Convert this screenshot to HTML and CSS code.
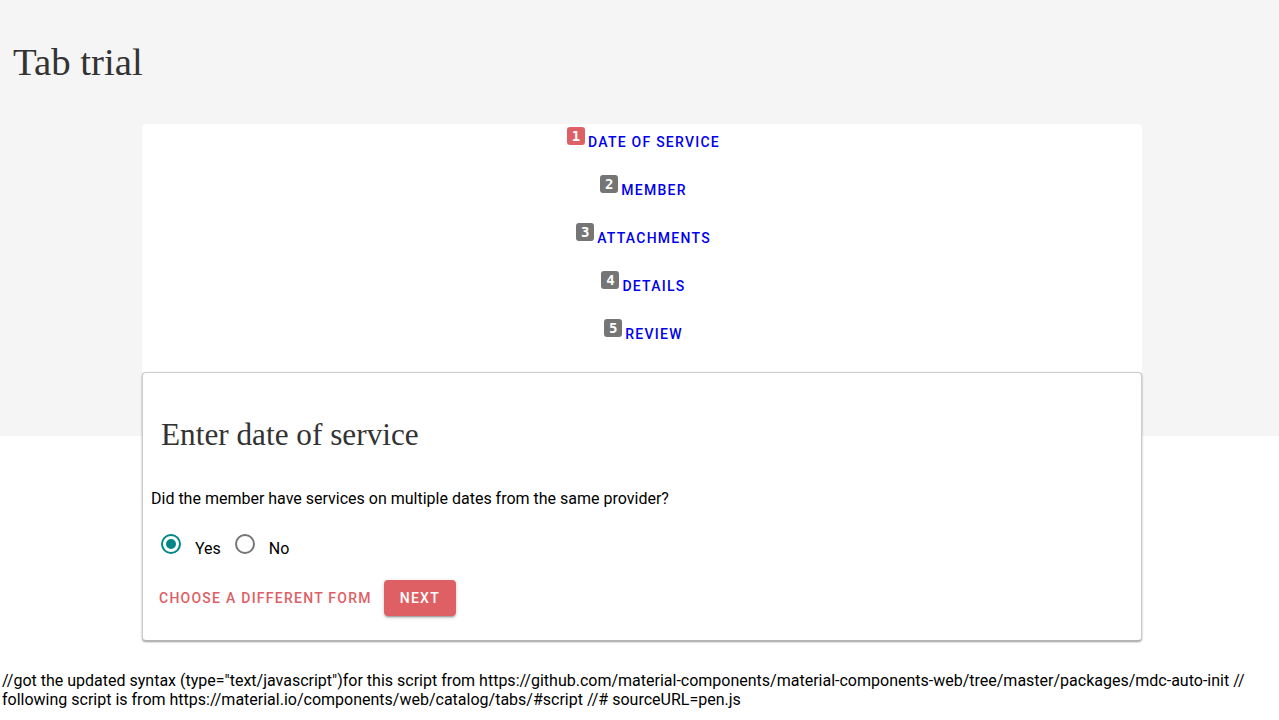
FILE: index.html
```html
<!DOCTYPE html>
<html lang="en">
<head>
    <meta charset="UTF-8">
    <meta name="viewport" content="width=device-width, initial-scale=1.0">
    <title>Tab trial</title>
    <link rel="stylesheet" href="styles.css">
</head>
<body>
    <header class="hero">
        <h1>Tab trial</h1>
    </header>
    <main class="wrapper">
        <nav class="tabs">
            <a class="tab" href="#"><span class="step step-active">1</span><span class="tab-label">Date of service</span></a>
            <a class="tab" href="#"><span class="step">2</span><span class="tab-label">Member</span></a>
            <a class="tab" href="#"><span class="step">3</span><span class="tab-label">Attachments</span></a>
            <a class="tab" href="#"><span class="step">4</span><span class="tab-label">Details</span></a>
            <a class="tab" href="#"><span class="step">5</span><span class="tab-label">Review</span></a>
        </nav>
        <section class="card">
            <h2>Enter date of service</h2>
            <p class="question">Did the member have services on multiple dates from the same provider?</p>
            <div class="radios">
                <label class="radio"><input type="radio" name="multiple" checked><span class="ring"></span><span>Yes</span></label>
                <label class="radio"><input type="radio" name="multiple"><span class="ring"></span><span>No</span></label>
            </div>
            <div class="actions">
                <button class="btn btn-text">Choose a different form</button>
                <button class="btn btn-raised">Next</button>
            </div>
        </section>
    </main>
    <p class="footnote">//got the updated syntax (type="text/javascript")for this script from https://github.com/material-components/material-components-web/tree/master/packages/mdc-auto-init // following script is from https://material.io/components/web/catalog/tabs/#script //# sourceURL=pen.js</p>
</body>
</html>
```

FILE: styles.css
```css
:root {
    --accent: #de6065;
    --teal: #018786;
    --band: #f5f5f5;
    --heading: #333333;
}
body {
    margin: 0;
    font-family: Roboto, sans-serif;
    font-size: 16px;
    color: #000000;
    background-color: #ffffff;
}
.hero {
    height: 436px;
    background-color: var(--band);
    padding: 40px 13px 0;
    box-sizing: border-box;
}
h1 {
    margin: 0;
    font-family: "Liberation Serif", serif;
    font-size: 38.8px;
    font-weight: 400;
    line-height: 44px;
    color: var(--heading);
}
.wrapper {
    width: 1000px;
    margin: -312px 0 0 142px;
}
.tabs {
    background-color: #ffffff;
    border-radius: 4px 4px 0 0;
    display: flex;
    flex-direction: column;
    height: 249px;
    margin-bottom: -1px;
}
.tab {
    height: 48px;
    display: flex;
    justify-content: center;
    padding-left: 3px;
    text-decoration: none;
    color: #0000ee;
}
.tab-label {
    font-size: 14px;
    font-weight: 500;
    letter-spacing: 1.25px;
    line-height: 20px;
    text-transform: uppercase;
    margin-top: 8px;
}
.step {
    width: 18px;
    height: 18px;
    border-radius: 3px;
    background-color: #757575;
    color: #ffffff;
    font-family: "DejaVu Sans Mono", monospace;
    font-size: 14px;
    font-weight: 700;
    line-height: 18px;
    text-align: center;
    margin: 3px 3px 0 0;
}
.step-active {
    background-color: var(--accent);
}
.card {
    height: 269px;
    box-sizing: border-box;
    border: 1px solid #cccccc;
    border-bottom-color: #b5b5b5;
    border-radius: 4px;
    background-color: #ffffff;
    box-shadow: 0 1px 2px rgba(0, 0, 0, 0.4);
    padding: 43px 8px 0;
    position: relative;
}
h2 {
    margin: 0 0 0 10px;
    font-family: "Liberation Serif", serif;
    font-size: 31.25px;
    font-weight: 400;
    line-height: 37px;
    color: var(--heading);
}
.question {
    margin: 34px 0 0;
    line-height: 24px;
}
.radios {
    display: flex;
    margin-top: 22px;
    height: 28px;
}
.radio {
    display: flex;
    margin-left: 10px;
    margin-right: 4px;
    cursor: pointer;
    line-height: 24px;
}
.radio span:last-child {
    padding-top: 4px;
}
.radio input {
    position: absolute;
    opacity: 0;
}
.ring {
    width: 20px;
    height: 20px;
    box-sizing: border-box;
    border: 2px solid #757575;
    border-radius: 50%;
    margin-right: 14px;
    display: flex;
    align-items: center;
    justify-content: center;
    margin-top: 1px;
}
input:checked + .ring {
    border-color: var(--teal);
}
input:checked + .ring::after {
    content: '';
    width: 10px;
    height: 10px;
    border-radius: 50%;
    background-color: var(--teal);
}
.actions {
    display: flex;
    align-items: center;
    gap: 4px;
    margin-top: 19px;
}
.btn {
    height: 36px;
    padding: 0 8px;
    border: none;
    border-radius: 4px;
    background: none;
    font-family: Roboto, sans-serif;
    font-size: 14px;
    font-weight: 500;
    letter-spacing: 1.25px;
    text-transform: uppercase;
    cursor: pointer;
}
.btn-text {
    color: var(--accent);
}
.btn-raised {
    padding: 0 16px;
    background-color: var(--accent);
    color: #ffffff;
    box-shadow: 0 3px 1px -2px rgba(0,0,0,0.2), 0 2px 2px 0 rgba(0,0,0,0.14), 0 1px 5px 0 rgba(0,0,0,0.12);
}
.footnote {
    margin: 30px 0 0 2px;
    line-height: 19px;
}
```
